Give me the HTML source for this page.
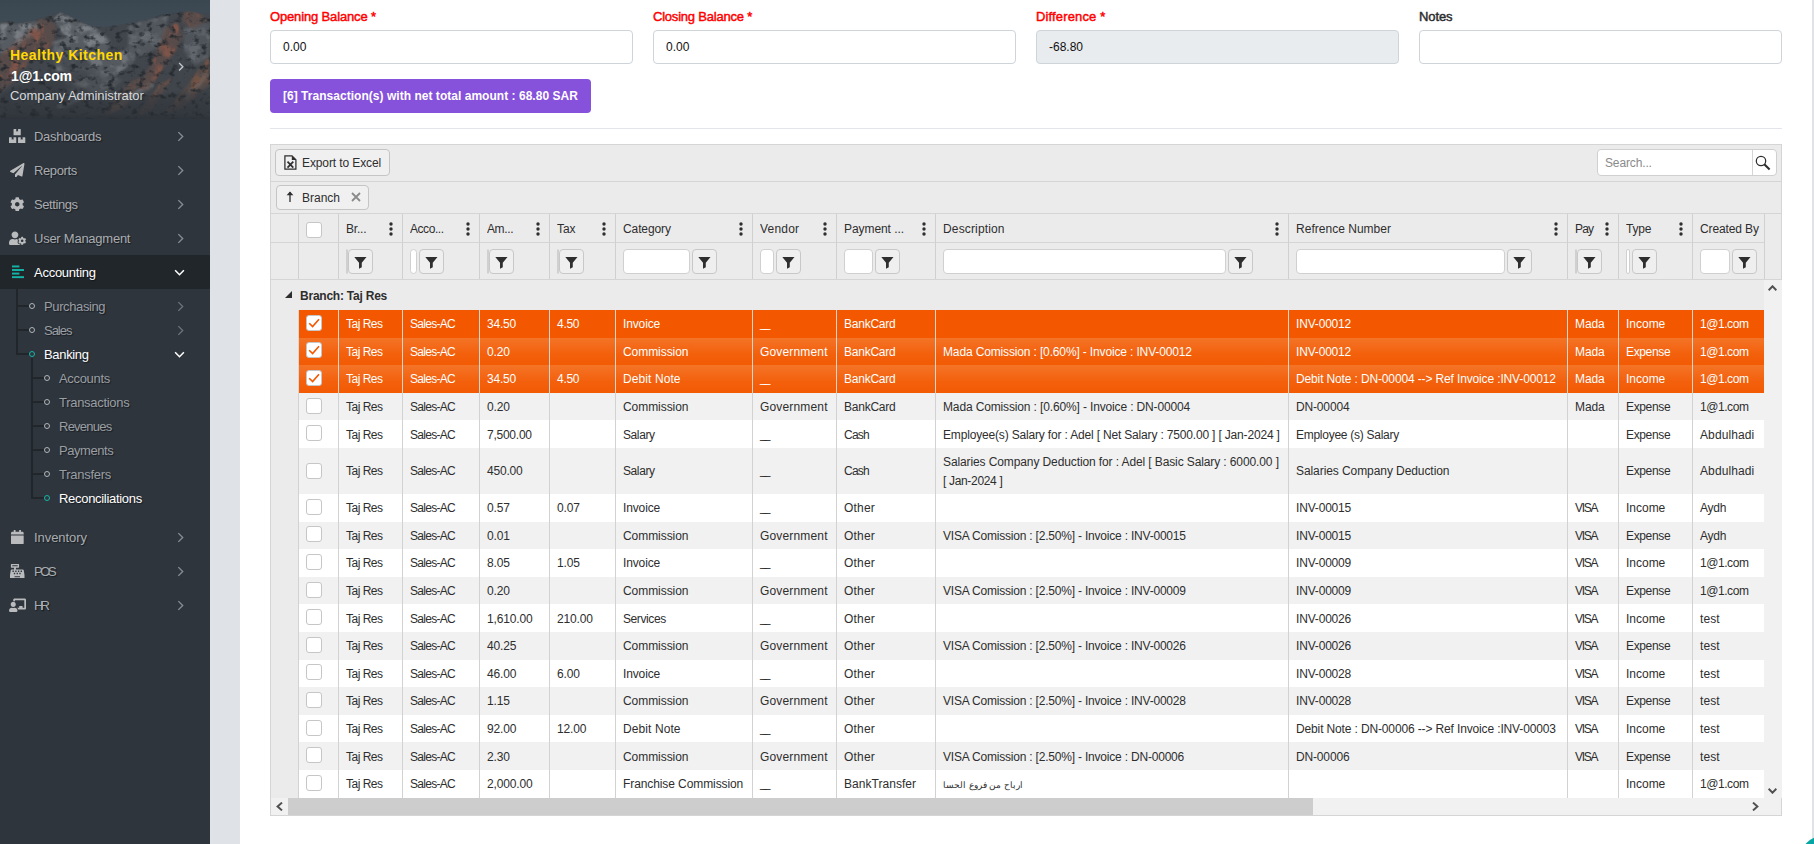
<!DOCTYPE html>
<html><head><meta charset="utf-8"><title>Reconciliations</title>
<style>
*{box-sizing:border-box}
html,body{margin:0;padding:0;overflow:hidden;width:1814px;height:844px}
#root{position:absolute;left:0;top:0;width:1814px;height:844px;overflow:hidden;background:#fff}
body{position:relative;background:#fff;font-family:"Liberation Sans",sans-serif;font-size:12px;color:#2e2e2e}
#sb{position:absolute;left:0;top:0;width:210px;height:844px;background:#2e353d;overflow:hidden}
#strip{position:absolute;left:210px;top:0;width:30px;height:844px;background:#dfe2e6}
#rstrip{position:absolute;left:1812px;top:0;width:2px;height:844px;background:#dfe2e6}
#fab{position:absolute;left:1799.5px;top:836px;width:46px;height:46px;border-radius:50%;background:#06a6a6}
#hdr{position:absolute;left:0;top:0;width:210px;height:119px;overflow:hidden;background:#3b4650}
#hdr svg.bg{position:absolute;left:0;top:0}
#hdr .t1{position:absolute;left:10px;top:46px;font-size:14px;font-weight:700;color:#ffd900;letter-spacing:.46px;white-space:nowrap;line-height:18px}
#hdr .t2{position:absolute;left:11px;top:67px;font-size:14px;font-weight:700;color:#fff;letter-spacing:-.15px;white-space:nowrap;line-height:18px}
#hdr .t3{position:absolute;left:10px;top:87px;font-size:13px;letter-spacing:-.07px;color:#d6d9db;white-space:nowrap;line-height:18px}
.mi{position:absolute;left:0;width:210px;height:34px;color:#a9adb1;font-size:13px;text-shadow:1px 1px 1px rgba(0,0,0,.45)}
.mi.act{background:#21262b;color:#fff}
.mi .ico{position:absolute;left:9px;top:0;width:17px;height:34px;display:flex;align-items:center;justify-content:center}
.mi .lbl{position:absolute;left:34px;top:1px;line-height:34px;white-space:nowrap;letter-spacing:-.26px}
.fa{display:block}
.chev{position:absolute;left:177px;top:50%;margin-top:-5.5px;width:7px;height:11px}
.chevd{position:absolute;left:174px;top:50%;margin-top:-3px;width:11px;height:7px}
.si{position:absolute;left:0;width:210px;height:24px;font-size:13px;text-shadow:1px 1px 1px rgba(0,0,0,.45)}
.si .ring{position:absolute;top:9px;width:6px;height:6px;border:1px solid #b0b4b8;border-radius:50%}
.si .slbl{position:absolute;top:1px;line-height:24px;white-space:nowrap;letter-spacing:-.3px}
.tl{position:absolute;background:#21262b}

#main{position:absolute;left:240px;top:0;width:1572px;height:844px;background:#fff}
.flbl{position:absolute;top:9px;font-size:13px;font-weight:400;color:#ff0000;-webkit-text-stroke:.45px #ff0000;letter-spacing:-.12px;white-space:nowrap;line-height:16px}
.finp{position:absolute;top:30px;width:363px;height:34px;border:1px solid #ced4da;border-radius:4px;background:#fff;font-size:12px;line-height:32px;padding-left:12px;color:#111;font-weight:400}
.pbtn{position:absolute;left:270px;top:79px;width:321px;height:34px;border-radius:4px;background:#8651db;color:#fff;font-weight:700;font-size:12px;line-height:34px;padding-left:13px;white-space:nowrap;letter-spacing:.03px}
.hr{position:absolute;left:270px;top:128px;width:1512px;height:1px;background:#e3e5ea}
#grid{position:absolute;left:270px;top:144px;width:1512px;height:672px;border:1px solid #d5d5d5;background:#ecebec;color:#2e2e2e;font-size:12px;letter-spacing:-.14px}
#grid .abs{position:absolute}
.kbtn{position:absolute;border:1px solid #c5c5c5;border-radius:4px;background:#f0f0f0}
.hline{position:absolute;left:0;width:1510px;height:1px;background:#d5d5d5}
.vline{position:absolute;width:1px;background:#d0d0d0}
.hc{position:absolute;top:70px;height:28px;line-height:30px;white-space:nowrap;overflow:hidden}
.keb{position:absolute;top:78px;width:4px;height:14px}
.fbtn{position:absolute;top:105px;width:25px;height:25px;border:1px solid #c8c8c8;border-radius:4px;background:#efefef}
.fbtn svg{position:absolute;left:4.8px;top:5.8px;width:12.8px;height:13.4px}
.finput{position:absolute;top:105px;height:25px;border:1px solid #d0d0d0;border-radius:4px;background:#fff}
.cb{position:absolute;width:16px;height:16px;border:1px solid #c6c6c6;border-radius:3px;background:#fff}
.row{position:absolute;left:27px;width:1466px}
.row .c{position:absolute;top:0;height:100%;border-left:1px solid #d2d2d2;padding:5.3px 0 0 7px;line-height:18px;white-space:nowrap;overflow:hidden}
.row.sel{color:#fff}
.row.sel .c{border-left-color:#dcd6d0}

.ar{font-size:9.1px;letter-spacing:0}
.grow{position:absolute;left:0;top:135px;width:1493px;height:30px;font-weight:700;line-height:32px;letter-spacing:-.23px}
.vsb{position:absolute;left:1493px;top:135px;width:18px;height:518px;background:#f1f1f1}
.hsb{position:absolute;left:0;top:653px;width:1510px;height:17px;background:#f1f1f1}
.hsb .thumb{position:absolute;left:17px;top:0;width:1025px;height:17px;background:#cdcdcd}
</style></head>
<body><div id="root">
<div id="main"></div>
<div class="flbl" style="left:270px;letter-spacing:-0.151px">Opening Balance *</div>
<div class="flbl" style="left:653px;letter-spacing:-0.214px">Closing Balance *</div>
<div class="flbl" style="left:1036px;letter-spacing:0.138px">Difference *</div>
<div class="flbl" style="left:1419px;color:#2b2b2b;-webkit-text-stroke:.45px #2b2b2b;letter-spacing:-0.117px">Notes</div>
<div class="finp" style="left:270px">0.00</div>
<div class="finp" style="left:653px">0.00</div>
<div class="finp" style="left:1036px;background:#e9ecef">-68.80</div>
<div class="finp" style="left:1419px"></div>
<div class="pbtn">[6] Transaction(s) with net total amount : 68.80 SAR</div>
<div class="hr"></div>
<div id="grid">
<div class="kbtn" style="left:4px;top:4px;width:115px;height:27px"></div>
<svg class="abs" style="left:13px;top:9.5px;width:13px;height:15px" viewBox="0 0 13 15"><path d="M0.9 0.9 H8 L11.9 4.8 V14 H0.9 Z" fill="none" stroke="#2e2e2e" stroke-width="1.25"/><path d="M7.8 0.9 L11.9 5 H7.8 Z" fill="#2e2e2e"/><path d="M3.5 6.6 L9.3 12.6 M9.3 6.6 L3.5 12.6" stroke="#2e2e2e" stroke-width="1.7"/></svg>
<div class="abs" style="left:31px;top:5px;line-height:27px;white-space:nowrap;letter-spacing:-.11px">Export to Excel</div>
<div class="abs" style="left:1326px;top:4px;width:180px;height:27px;border:1px solid #d0d0d0;border-radius:4px;background:#fff"></div>
<div class="abs" style="left:1481px;top:5px;width:1px;height:25px;background:#d5d5d5"></div>
<div class="abs" style="left:1334px;top:5px;line-height:27px;color:#8a8a8a">Search...</div>
<svg class="abs" style="left:1484.4px;top:9.800000000000011px;width:16px;height:16px" viewBox="0 0 16 16"><circle cx="6" cy="6" r="4.7" fill="none" stroke="#2e2e2e" stroke-width="1.25"/><path d="M9.3 9.3 L14.6 14.4" stroke="#2e2e2e" stroke-width="2.1"/></svg>
<div class="hline" style="top:36px"></div>
<div class="kbtn" style="left:5px;top:40px;width:93px;height:25px"></div>
<svg class="abs" style="left:15px;top:46px;width:8px;height:11px" viewBox="0 0 8 11"><path d="M4 1 V11" stroke="#2e2e2e" stroke-width="1.3"/><path d="M0.6 4.2 L4 0.4 L7.4 4.2 Z" fill="#2e2e2e"/></svg>
<div class="abs" style="left:31px;top:41px;line-height:25px;white-space:nowrap;letter-spacing:0">Branch</div>
<svg class="abs" style="left:80px;top:47px;width:10px;height:10px" viewBox="0 0 10 10"><path d="M1 1 L9 9 M9 1 L1 9" stroke="#8a8a8a" stroke-width="1.8"/></svg>
<div class="hline" style="top:68px"></div>
<div class="hline" style="top:97px;width:1494px"></div>
<div class="hline" style="top:134px"></div>
<div class="vline" style="left:27px;top:69px;height:65px"></div>
<div class="vline" style="left:67px;top:69px;height:65px"></div>
<div class="vline" style="left:131px;top:69px;height:65px"></div>
<div class="vline" style="left:208px;top:69px;height:65px"></div>
<div class="vline" style="left:278px;top:69px;height:65px"></div>
<div class="vline" style="left:344px;top:69px;height:65px"></div>
<div class="vline" style="left:481px;top:69px;height:65px"></div>
<div class="vline" style="left:565px;top:69px;height:65px"></div>
<div class="vline" style="left:664px;top:69px;height:65px"></div>
<div class="vline" style="left:1017px;top:69px;height:65px"></div>
<div class="vline" style="left:1296px;top:69px;height:65px"></div>
<div class="vline" style="left:1347px;top:69px;height:65px"></div>
<div class="vline" style="left:1421px;top:69px;height:65px"></div>
<div class="vline" style="left:1493px;top:69px;height:65px"></div>
<div class="cb" style="left:35px;top:77px"></div>
<div class="hc" style="left:75px;top:69px;width:55px"><span style="letter-spacing:-0.186px">Br...</span></div>
<svg class="keb" style="top:77px;left:118px" viewBox="0 0 4 14"><circle cx="2" cy="2" r="1.7" fill="#2e2e2e"/><circle cx="2" cy="7" r="1.7" fill="#2e2e2e"/><circle cx="2" cy="12" r="1.7" fill="#2e2e2e"/></svg>
<div class="hc" style="left:139px;top:69px;width:68px"><span style="letter-spacing:-0.448px">Acco...</span></div>
<svg class="keb" style="top:77px;left:195px" viewBox="0 0 4 14"><circle cx="2" cy="2" r="1.7" fill="#2e2e2e"/><circle cx="2" cy="7" r="1.7" fill="#2e2e2e"/><circle cx="2" cy="12" r="1.7" fill="#2e2e2e"/></svg>
<div class="hc" style="left:216px;top:69px;width:61px"><span style="letter-spacing:-0.379px">Am...</span></div>
<svg class="keb" style="top:77px;left:265px" viewBox="0 0 4 14"><circle cx="2" cy="2" r="1.7" fill="#2e2e2e"/><circle cx="2" cy="7" r="1.7" fill="#2e2e2e"/><circle cx="2" cy="12" r="1.7" fill="#2e2e2e"/></svg>
<div class="hc" style="left:286px;top:69px;width:57px"><span style="letter-spacing:-0.094px">Tax</span></div>
<svg class="keb" style="top:77px;left:331px" viewBox="0 0 4 14"><circle cx="2" cy="2" r="1.7" fill="#2e2e2e"/><circle cx="2" cy="7" r="1.7" fill="#2e2e2e"/><circle cx="2" cy="12" r="1.7" fill="#2e2e2e"/></svg>
<div class="hc" style="left:352px;top:69px;width:128px"><span style="letter-spacing:-0.1px">Category</span></div>
<svg class="keb" style="top:77px;left:468px" viewBox="0 0 4 14"><circle cx="2" cy="2" r="1.7" fill="#2e2e2e"/><circle cx="2" cy="7" r="1.7" fill="#2e2e2e"/><circle cx="2" cy="12" r="1.7" fill="#2e2e2e"/></svg>
<div class="hc" style="left:489px;top:69px;width:75px"><span style="letter-spacing:0.191px">Vendor</span></div>
<svg class="keb" style="top:77px;left:552px" viewBox="0 0 4 14"><circle cx="2" cy="2" r="1.7" fill="#2e2e2e"/><circle cx="2" cy="7" r="1.7" fill="#2e2e2e"/><circle cx="2" cy="12" r="1.7" fill="#2e2e2e"/></svg>
<div class="hc" style="left:573px;top:69px;width:90px"><span style="letter-spacing:-0.07px">Payment ...</span></div>
<svg class="keb" style="top:77px;left:651px" viewBox="0 0 4 14"><circle cx="2" cy="2" r="1.7" fill="#2e2e2e"/><circle cx="2" cy="7" r="1.7" fill="#2e2e2e"/><circle cx="2" cy="12" r="1.7" fill="#2e2e2e"/></svg>
<div class="hc" style="left:672px;top:69px;width:344px"><span style="letter-spacing:0.147px">Description</span></div>
<svg class="keb" style="top:77px;left:1004px" viewBox="0 0 4 14"><circle cx="2" cy="2" r="1.7" fill="#2e2e2e"/><circle cx="2" cy="7" r="1.7" fill="#2e2e2e"/><circle cx="2" cy="12" r="1.7" fill="#2e2e2e"/></svg>
<div class="hc" style="left:1025px;top:69px;width:270px"><span style="letter-spacing:0.02px">Refrence Number</span></div>
<svg class="keb" style="top:77px;left:1283px" viewBox="0 0 4 14"><circle cx="2" cy="2" r="1.7" fill="#2e2e2e"/><circle cx="2" cy="7" r="1.7" fill="#2e2e2e"/><circle cx="2" cy="12" r="1.7" fill="#2e2e2e"/></svg>
<div class="hc" style="left:1304px;top:69px;width:42px"><span style="letter-spacing:-0.844px">Pay</span></div>
<svg class="keb" style="top:77px;left:1334px" viewBox="0 0 4 14"><circle cx="2" cy="2" r="1.7" fill="#2e2e2e"/><circle cx="2" cy="7" r="1.7" fill="#2e2e2e"/><circle cx="2" cy="12" r="1.7" fill="#2e2e2e"/></svg>
<div class="hc" style="left:1355px;top:69px;width:65px"><span style="letter-spacing:-0.172px">Type</span></div>
<svg class="keb" style="top:77px;left:1408px" viewBox="0 0 4 14"><circle cx="2" cy="2" r="1.7" fill="#2e2e2e"/><circle cx="2" cy="7" r="1.7" fill="#2e2e2e"/><circle cx="2" cy="12" r="1.7" fill="#2e2e2e"/></svg>
<div class="hc" style="left:1429px;top:69px;width:63px"><span style="letter-spacing:-0.115px">Created By</span></div>
<div class="finput" style="left:75px;top:104px;width:2px"></div>
<div class="fbtn" style="left:77px;top:104px"><svg viewBox="0 0 13 13"><path d="M0.3 0.8 H12.7 L7.9 6.6 V11 L5.1 12.6 V6.6 Z" fill="#2e2e2e"/></svg></div>
<div class="finput" style="left:139px;top:104px;width:7px"></div>
<div class="fbtn" style="left:148px;top:104px"><svg viewBox="0 0 13 13"><path d="M0.3 0.8 H12.7 L7.9 6.6 V11 L5.1 12.6 V6.6 Z" fill="#2e2e2e"/></svg></div>
<div class="finput" style="left:216px;top:104px;width:2px"></div>
<div class="fbtn" style="left:218px;top:104px"><svg viewBox="0 0 13 13"><path d="M0.3 0.8 H12.7 L7.9 6.6 V11 L5.1 12.6 V6.6 Z" fill="#2e2e2e"/></svg></div>
<div class="finput" style="left:286px;top:104px;width:2px"></div>
<div class="fbtn" style="left:288px;top:104px"><svg viewBox="0 0 13 13"><path d="M0.3 0.8 H12.7 L7.9 6.6 V11 L5.1 12.6 V6.6 Z" fill="#2e2e2e"/></svg></div>
<div class="finput" style="left:352px;top:104px;width:67px"></div>
<div class="fbtn" style="left:421px;top:104px"><svg viewBox="0 0 13 13"><path d="M0.3 0.8 H12.7 L7.9 6.6 V11 L5.1 12.6 V6.6 Z" fill="#2e2e2e"/></svg></div>
<div class="finput" style="left:489px;top:104px;width:14px"></div>
<div class="fbtn" style="left:505px;top:104px"><svg viewBox="0 0 13 13"><path d="M0.3 0.8 H12.7 L7.9 6.6 V11 L5.1 12.6 V6.6 Z" fill="#2e2e2e"/></svg></div>
<div class="finput" style="left:573px;top:104px;width:29px"></div>
<div class="fbtn" style="left:604px;top:104px"><svg viewBox="0 0 13 13"><path d="M0.3 0.8 H12.7 L7.9 6.6 V11 L5.1 12.6 V6.6 Z" fill="#2e2e2e"/></svg></div>
<div class="finput" style="left:672px;top:104px;width:283px"></div>
<div class="fbtn" style="left:957px;top:104px"><svg viewBox="0 0 13 13"><path d="M0.3 0.8 H12.7 L7.9 6.6 V11 L5.1 12.6 V6.6 Z" fill="#2e2e2e"/></svg></div>
<div class="finput" style="left:1025px;top:104px;width:209px"></div>
<div class="fbtn" style="left:1236px;top:104px"><svg viewBox="0 0 13 13"><path d="M0.3 0.8 H12.7 L7.9 6.6 V11 L5.1 12.6 V6.6 Z" fill="#2e2e2e"/></svg></div>
<div class="finput" style="left:1304px;top:104px;width:2px"></div>
<div class="fbtn" style="left:1306px;top:104px"><svg viewBox="0 0 13 13"><path d="M0.3 0.8 H12.7 L7.9 6.6 V11 L5.1 12.6 V6.6 Z" fill="#2e2e2e"/></svg></div>
<div class="finput" style="left:1355px;top:104px;width:4px"></div>
<div class="fbtn" style="left:1361px;top:104px"><svg viewBox="0 0 13 13"><path d="M0.3 0.8 H12.7 L7.9 6.6 V11 L5.1 12.6 V6.6 Z" fill="#2e2e2e"/></svg></div>
<div class="finput" style="left:1429px;top:104px;width:30px"></div>
<div class="fbtn" style="left:1461px;top:104px"><svg viewBox="0 0 13 13"><path d="M0.3 0.8 H12.7 L7.9 6.6 V11 L5.1 12.6 V6.6 Z" fill="#2e2e2e"/></svg></div>

<div class="grow"><svg class="abs" style="left:14px;top:11px;width:7px;height:7px" viewBox="0 0 7 7"><path d="M7 0 V7 H0 Z" fill="#2e2e2e"/></svg><span class="abs" style="left:29px;top:0;white-space:nowrap">Branch: Taj Res</span></div>
<div class="vsb">
<svg class="abs" style="left:4px;top:4.5px;width:9px;height:6px" viewBox="0 0 9 6"><path d="M0.6 5.2 L4.5 1.3 L8.4 5.2" fill="none" stroke="#505050" stroke-width="2"/></svg>
<svg class="abs" style="left:4px;top:507.5px;width:9px;height:6px" viewBox="0 0 9 6"><path d="M0.6 0.8 L4.5 4.7 L8.4 0.8" fill="none" stroke="#505050" stroke-width="2"/></svg>
</div>
<div class="hsb"><div class="thumb"></div>
<svg class="abs" style="left:5px;top:4.3px;width:7px;height:9px" viewBox="0 0 7 9"><path d="M6 0.6 L1.6 4.5 L6 8.4" fill="none" stroke="#505050" stroke-width="2"/></svg>
<svg class="abs" style="left:1481px;top:4.3px;width:7px;height:9px" viewBox="0 0 7 9"><path d="M1 0.6 L5.4 4.5 L1 8.4" fill="none" stroke="#505050" stroke-width="2"/></svg>
</div>

<div class="row sel" style="top:165.0px;height:27.6px;background:#f35800"><div class="c" style="left:0px;width:40px;padding-top:5.3px"><div class="cb" style="left:7px;top:4.8px"><svg style="position:absolute;left:1px;top:1px;width:12px;height:12px" viewBox="0 0 12 12"><path d="M1.2 6.2 L4.6 9.6 L11 2.2" fill="none" stroke="#f35800" stroke-width="1.6"/></svg></div></div><div class="c" style="left:40px;width:64px;padding-top:5.3px"><span style="letter-spacing:-0.503px">Taj Res</span></div><div class="c" style="left:104px;width:77px;padding-top:5.3px"><span style="letter-spacing:-0.705px">Sales-AC</span></div><div class="c" style="left:181px;width:70px;padding-top:5.3px"><span style="letter-spacing:-0.195px">34.50</span></div><div class="c" style="left:251px;width:66px;padding-top:5.3px"><span style="letter-spacing:-0.286px">4.50</span></div><div class="c" style="left:317px;width:137px;padding-top:5.3px"><span style="letter-spacing:-0.13px">Invoice</span></div><div class="c" style="left:454px;width:84px;padding-top:5.3px"><span style="letter-spacing:-2.859px;position:relative;top:-1px">__</span></div><div class="c" style="left:538px;width:99px;padding-top:5.3px"><span style="letter-spacing:-0.232px">BankCard</span></div><div class="c" style="left:637px;width:353px;padding-top:5.3px"></div><div class="c" style="left:990px;width:279px;padding-top:5.3px"><span style="letter-spacing:-0.177px">INV-00012</span></div><div class="c" style="left:1269px;width:51px;padding-top:5.3px"><span style="letter-spacing:-0.077px">Mada</span></div><div class="c" style="left:1320px;width:74px;padding-top:5.3px"><span style="letter-spacing:-0.012px">Income</span></div><div class="c" style="left:1394px;width:72px;padding-top:5.3px"><span style="letter-spacing:-0.441px">1@1.com</span></div></div>
<div class="row sel" style="top:192.6px;height:27.6px;background:linear-gradient(to bottom,#f47427 0%,#f3600c 60%,#f35a04 100%)"><div class="c" style="left:0px;width:40px;padding-top:5.3px"><div class="cb" style="left:7px;top:4.8px"><svg style="position:absolute;left:1px;top:1px;width:12px;height:12px" viewBox="0 0 12 12"><path d="M1.2 6.2 L4.6 9.6 L11 2.2" fill="none" stroke="#f35800" stroke-width="1.6"/></svg></div></div><div class="c" style="left:40px;width:64px;padding-top:5.3px"><span style="letter-spacing:-0.503px">Taj Res</span></div><div class="c" style="left:104px;width:77px;padding-top:5.3px"><span style="letter-spacing:-0.705px">Sales-AC</span></div><div class="c" style="left:181px;width:70px;padding-top:5.3px">0.20</div><div class="c" style="left:251px;width:66px;padding-top:5.3px"></div><div class="c" style="left:317px;width:137px;padding-top:5.3px"><span style="letter-spacing:-0.057px">Commission</span></div><div class="c" style="left:454px;width:84px;padding-top:5.3px"><span style="letter-spacing:0.163px">Government</span></div><div class="c" style="left:538px;width:99px;padding-top:5.3px"><span style="letter-spacing:-0.232px">BankCard</span></div><div class="c" style="left:637px;width:353px;padding-top:5.3px"><span style="letter-spacing:-0.144px">Mada Comission : [0.60%] - Invoice : INV-00012</span></div><div class="c" style="left:990px;width:279px;padding-top:5.3px"><span style="letter-spacing:-0.177px">INV-00012</span></div><div class="c" style="left:1269px;width:51px;padding-top:5.3px"><span style="letter-spacing:-0.077px">Mada</span></div><div class="c" style="left:1320px;width:74px;padding-top:5.3px"><span style="letter-spacing:-0.351px">Expense</span></div><div class="c" style="left:1394px;width:72px;padding-top:5.3px"><span style="letter-spacing:-0.441px">1@1.com</span></div></div>
<div class="row sel" style="top:220.2px;height:27.6px;background:linear-gradient(to bottom,#f47427 0%,#f3600c 60%,#f35a04 100%)"><div class="c" style="left:0px;width:40px;padding-top:5.3px"><div class="cb" style="left:7px;top:4.8px"><svg style="position:absolute;left:1px;top:1px;width:12px;height:12px" viewBox="0 0 12 12"><path d="M1.2 6.2 L4.6 9.6 L11 2.2" fill="none" stroke="#f35800" stroke-width="1.6"/></svg></div></div><div class="c" style="left:40px;width:64px;padding-top:5.3px"><span style="letter-spacing:-0.503px">Taj Res</span></div><div class="c" style="left:104px;width:77px;padding-top:5.3px"><span style="letter-spacing:-0.705px">Sales-AC</span></div><div class="c" style="left:181px;width:70px;padding-top:5.3px"><span style="letter-spacing:-0.195px">34.50</span></div><div class="c" style="left:251px;width:66px;padding-top:5.3px"><span style="letter-spacing:-0.286px">4.50</span></div><div class="c" style="left:317px;width:137px;padding-top:5.3px"><span style="letter-spacing:0.089px">Debit Note</span></div><div class="c" style="left:454px;width:84px;padding-top:5.3px"><span style="letter-spacing:-2.859px;position:relative;top:-1px">__</span></div><div class="c" style="left:538px;width:99px;padding-top:5.3px"><span style="letter-spacing:-0.232px">BankCard</span></div><div class="c" style="left:637px;width:353px;padding-top:5.3px"></div><div class="c" style="left:990px;width:279px;padding-top:5.3px"><span style="letter-spacing:-0.138px">Debit Note : DN-00004 --> Ref Invoice :INV-00012</span></div><div class="c" style="left:1269px;width:51px;padding-top:5.3px"><span style="letter-spacing:-0.077px">Mada</span></div><div class="c" style="left:1320px;width:74px;padding-top:5.3px"><span style="letter-spacing:-0.012px">Income</span></div><div class="c" style="left:1394px;width:72px;padding-top:5.3px"><span style="letter-spacing:-0.441px">1@1.com</span></div></div>
<div class="row" style="top:247.8px;height:27.6px;background:#f1f1f1"><div class="c" style="left:0px;width:40px;padding-top:5.3px"><div class="cb" style="left:7px;top:4.8px"></div></div><div class="c" style="left:40px;width:64px;padding-top:5.3px"><span style="letter-spacing:-0.503px">Taj Res</span></div><div class="c" style="left:104px;width:77px;padding-top:5.3px"><span style="letter-spacing:-0.705px">Sales-AC</span></div><div class="c" style="left:181px;width:70px;padding-top:5.3px">0.20</div><div class="c" style="left:251px;width:66px;padding-top:5.3px"></div><div class="c" style="left:317px;width:137px;padding-top:5.3px"><span style="letter-spacing:-0.057px">Commission</span></div><div class="c" style="left:454px;width:84px;padding-top:5.3px"><span style="letter-spacing:0.163px">Government</span></div><div class="c" style="left:538px;width:99px;padding-top:5.3px"><span style="letter-spacing:-0.232px">BankCard</span></div><div class="c" style="left:637px;width:353px;padding-top:5.3px"><span style="letter-spacing:-0.14px">Mada Comission : [0.60%] - Invoice : DN-00004</span></div><div class="c" style="left:990px;width:279px;padding-top:5.3px"><span style="letter-spacing:-0.158px">DN-00004</span></div><div class="c" style="left:1269px;width:51px;padding-top:5.3px"><span style="letter-spacing:-0.077px">Mada</span></div><div class="c" style="left:1320px;width:74px;padding-top:5.3px"><span style="letter-spacing:-0.351px">Expense</span></div><div class="c" style="left:1394px;width:72px;padding-top:5.3px"><span style="letter-spacing:-0.441px">1@1.com</span></div></div>
<div class="row" style="top:275.4px;height:27.6px;background:#fff"><div class="c" style="left:0px;width:40px;padding-top:5.3px"><div class="cb" style="left:7px;top:4.8px"></div></div><div class="c" style="left:40px;width:64px;padding-top:5.3px"><span style="letter-spacing:-0.503px">Taj Res</span></div><div class="c" style="left:104px;width:77px;padding-top:5.3px"><span style="letter-spacing:-0.705px">Sales-AC</span></div><div class="c" style="left:181px;width:70px;padding-top:5.3px"><span style="letter-spacing:-0.246px">7,500.00</span></div><div class="c" style="left:251px;width:66px;padding-top:5.3px"></div><div class="c" style="left:317px;width:137px;padding-top:5.3px"><span style="letter-spacing:-0.403px">Salary</span></div><div class="c" style="left:454px;width:84px;padding-top:5.3px"><span style="letter-spacing:-2.859px;position:relative;top:-1px">__</span></div><div class="c" style="left:538px;width:99px;padding-top:5.3px"><span style="letter-spacing:-0.755px">Cash</span></div><div class="c" style="left:637px;width:353px;padding-top:5.3px"><span style="letter-spacing:-0.17px">Employee(s) Salary for : Adel [ Net Salary : 7500.00 ] [ Jan-2024 ]</span></div><div class="c" style="left:990px;width:279px;padding-top:5.3px"><span style="letter-spacing:-0.269px">Employee (s) Salary</span></div><div class="c" style="left:1269px;width:51px;padding-top:5.3px"></div><div class="c" style="left:1320px;width:74px;padding-top:5.3px"><span style="letter-spacing:-0.351px">Expense</span></div><div class="c" style="left:1394px;width:72px;padding-top:5.3px"><span style="letter-spacing:0.101px">Abdulhadi</span></div></div>
<div class="row" style="top:303.0px;height:46.0px;background:#f1f1f1"><div class="c" style="left:0px;width:40px;padding-top:13.5px"><div class="cb" style="left:7px;top:14.6px"></div></div><div class="c" style="left:40px;width:64px;padding-top:13.5px"><span style="letter-spacing:-0.503px">Taj Res</span></div><div class="c" style="left:104px;width:77px;padding-top:13.5px"><span style="letter-spacing:-0.705px">Sales-AC</span></div><div class="c" style="left:181px;width:70px;padding-top:13.5px"><span style="letter-spacing:-0.191px">450.00</span></div><div class="c" style="left:251px;width:66px;padding-top:13.5px"></div><div class="c" style="left:317px;width:137px;padding-top:13.5px"><span style="letter-spacing:-0.403px">Salary</span></div><div class="c" style="left:454px;width:84px;padding-top:13.5px"><span style="letter-spacing:-2.859px;position:relative;top:-1px">__</span></div><div class="c" style="left:538px;width:99px;padding-top:13.5px"><span style="letter-spacing:-0.755px">Cash</span></div><div class="c" style="left:637px;width:353px;padding-top:4.7px;line-height:19.2px"><span style="letter-spacing:-0.109px">Salaries Company Deduction for : Adel [ Basic Salary : 6000.00 ]</span><br><span style="letter-spacing:-0.33px">[ Jan-2024 ]</span></div><div class="c" style="left:990px;width:279px;padding-top:13.5px"><span style="letter-spacing:-0.077px">Salaries Company Deduction</span></div><div class="c" style="left:1269px;width:51px;padding-top:13.5px"></div><div class="c" style="left:1320px;width:74px;padding-top:13.5px"><span style="letter-spacing:-0.351px">Expense</span></div><div class="c" style="left:1394px;width:72px;padding-top:13.5px"><span style="letter-spacing:0.101px">Abdulhadi</span></div></div>
<div class="row" style="top:349.0px;height:27.6px;background:#fff"><div class="c" style="left:0px;width:40px;padding-top:5.3px"><div class="cb" style="left:7px;top:4.8px"></div></div><div class="c" style="left:40px;width:64px;padding-top:5.3px"><span style="letter-spacing:-0.503px">Taj Res</span></div><div class="c" style="left:104px;width:77px;padding-top:5.3px"><span style="letter-spacing:-0.705px">Sales-AC</span></div><div class="c" style="left:181px;width:70px;padding-top:5.3px">0.57</div><div class="c" style="left:251px;width:66px;padding-top:5.3px">0.07</div><div class="c" style="left:317px;width:137px;padding-top:5.3px"><span style="letter-spacing:-0.13px">Invoice</span></div><div class="c" style="left:454px;width:84px;padding-top:5.3px"><span style="letter-spacing:-2.859px;position:relative;top:-1px">__</span></div><div class="c" style="left:538px;width:99px;padding-top:5.3px"><span style="letter-spacing:0.184px">Other</span></div><div class="c" style="left:637px;width:353px;padding-top:5.3px"></div><div class="c" style="left:990px;width:279px;padding-top:5.3px"><span style="letter-spacing:-0.177px">INV-00015</span></div><div class="c" style="left:1269px;width:51px;padding-top:5.3px"><span style="letter-spacing:-1.286px">VISA</span></div><div class="c" style="left:1320px;width:74px;padding-top:5.3px"><span style="letter-spacing:-0.012px">Income</span></div><div class="c" style="left:1394px;width:72px;padding-top:5.3px"><span style="letter-spacing:-0.247px">Aydh</span></div></div>
<div class="row" style="top:376.6px;height:27.6px;background:#f1f1f1"><div class="c" style="left:0px;width:40px;padding-top:5.3px"><div class="cb" style="left:7px;top:4.8px"></div></div><div class="c" style="left:40px;width:64px;padding-top:5.3px"><span style="letter-spacing:-0.503px">Taj Res</span></div><div class="c" style="left:104px;width:77px;padding-top:5.3px"><span style="letter-spacing:-0.705px">Sales-AC</span></div><div class="c" style="left:181px;width:70px;padding-top:5.3px">0.01</div><div class="c" style="left:251px;width:66px;padding-top:5.3px"></div><div class="c" style="left:317px;width:137px;padding-top:5.3px"><span style="letter-spacing:-0.057px">Commission</span></div><div class="c" style="left:454px;width:84px;padding-top:5.3px"><span style="letter-spacing:0.163px">Government</span></div><div class="c" style="left:538px;width:99px;padding-top:5.3px"><span style="letter-spacing:0.184px">Other</span></div><div class="c" style="left:637px;width:353px;padding-top:5.3px"><span style="letter-spacing:-0.203px">VISA Comission : [2.50%] - Invoice : INV-00015</span></div><div class="c" style="left:990px;width:279px;padding-top:5.3px"><span style="letter-spacing:-0.177px">INV-00015</span></div><div class="c" style="left:1269px;width:51px;padding-top:5.3px"><span style="letter-spacing:-1.286px">VISA</span></div><div class="c" style="left:1320px;width:74px;padding-top:5.3px"><span style="letter-spacing:-0.351px">Expense</span></div><div class="c" style="left:1394px;width:72px;padding-top:5.3px"><span style="letter-spacing:-0.247px">Aydh</span></div></div>
<div class="row" style="top:404.2px;height:27.6px;background:#fff"><div class="c" style="left:0px;width:40px;padding-top:5.3px"><div class="cb" style="left:7px;top:4.8px"></div></div><div class="c" style="left:40px;width:64px;padding-top:5.3px"><span style="letter-spacing:-0.503px">Taj Res</span></div><div class="c" style="left:104px;width:77px;padding-top:5.3px"><span style="letter-spacing:-0.705px">Sales-AC</span></div><div class="c" style="left:181px;width:70px;padding-top:5.3px">8.05</div><div class="c" style="left:251px;width:66px;padding-top:5.3px">1.05</div><div class="c" style="left:317px;width:137px;padding-top:5.3px"><span style="letter-spacing:-0.13px">Invoice</span></div><div class="c" style="left:454px;width:84px;padding-top:5.3px"><span style="letter-spacing:-2.859px;position:relative;top:-1px">__</span></div><div class="c" style="left:538px;width:99px;padding-top:5.3px"><span style="letter-spacing:0.184px">Other</span></div><div class="c" style="left:637px;width:353px;padding-top:5.3px"></div><div class="c" style="left:990px;width:279px;padding-top:5.3px"><span style="letter-spacing:-0.177px">INV-00009</span></div><div class="c" style="left:1269px;width:51px;padding-top:5.3px"><span style="letter-spacing:-1.286px">VISA</span></div><div class="c" style="left:1320px;width:74px;padding-top:5.3px"><span style="letter-spacing:-0.012px">Income</span></div><div class="c" style="left:1394px;width:72px;padding-top:5.3px"><span style="letter-spacing:-0.441px">1@1.com</span></div></div>
<div class="row" style="top:431.8px;height:27.6px;background:#f1f1f1"><div class="c" style="left:0px;width:40px;padding-top:5.3px"><div class="cb" style="left:7px;top:4.8px"></div></div><div class="c" style="left:40px;width:64px;padding-top:5.3px"><span style="letter-spacing:-0.503px">Taj Res</span></div><div class="c" style="left:104px;width:77px;padding-top:5.3px"><span style="letter-spacing:-0.705px">Sales-AC</span></div><div class="c" style="left:181px;width:70px;padding-top:5.3px">0.20</div><div class="c" style="left:251px;width:66px;padding-top:5.3px"></div><div class="c" style="left:317px;width:137px;padding-top:5.3px"><span style="letter-spacing:-0.057px">Commission</span></div><div class="c" style="left:454px;width:84px;padding-top:5.3px"><span style="letter-spacing:0.163px">Government</span></div><div class="c" style="left:538px;width:99px;padding-top:5.3px"><span style="letter-spacing:0.184px">Other</span></div><div class="c" style="left:637px;width:353px;padding-top:5.3px"><span style="letter-spacing:-0.203px">VISA Comission : [2.50%] - Invoice : INV-00009</span></div><div class="c" style="left:990px;width:279px;padding-top:5.3px"><span style="letter-spacing:-0.177px">INV-00009</span></div><div class="c" style="left:1269px;width:51px;padding-top:5.3px"><span style="letter-spacing:-1.286px">VISA</span></div><div class="c" style="left:1320px;width:74px;padding-top:5.3px"><span style="letter-spacing:-0.351px">Expense</span></div><div class="c" style="left:1394px;width:72px;padding-top:5.3px"><span style="letter-spacing:-0.441px">1@1.com</span></div></div>
<div class="row" style="top:459.4px;height:27.6px;background:#fff"><div class="c" style="left:0px;width:40px;padding-top:5.3px"><div class="cb" style="left:7px;top:4.8px"></div></div><div class="c" style="left:40px;width:64px;padding-top:5.3px"><span style="letter-spacing:-0.503px">Taj Res</span></div><div class="c" style="left:104px;width:77px;padding-top:5.3px"><span style="letter-spacing:-0.705px">Sales-AC</span></div><div class="c" style="left:181px;width:70px;padding-top:5.3px">1,610.00</div><div class="c" style="left:251px;width:66px;padding-top:5.3px">210.00</div><div class="c" style="left:317px;width:137px;padding-top:5.3px"><span style="letter-spacing:-0.402px">Services</span></div><div class="c" style="left:454px;width:84px;padding-top:5.3px"><span style="letter-spacing:-2.859px;position:relative;top:-1px">__</span></div><div class="c" style="left:538px;width:99px;padding-top:5.3px"><span style="letter-spacing:0.184px">Other</span></div><div class="c" style="left:637px;width:353px;padding-top:5.3px"></div><div class="c" style="left:990px;width:279px;padding-top:5.3px"><span style="letter-spacing:-0.177px">INV-00026</span></div><div class="c" style="left:1269px;width:51px;padding-top:5.3px"><span style="letter-spacing:-1.286px">VISA</span></div><div class="c" style="left:1320px;width:74px;padding-top:5.3px"><span style="letter-spacing:-0.012px">Income</span></div><div class="c" style="left:1394px;width:72px;padding-top:5.3px"><span style="letter-spacing:0.085px">test</span></div></div>
<div class="row" style="top:487.0px;height:27.6px;background:#f1f1f1"><div class="c" style="left:0px;width:40px;padding-top:5.3px"><div class="cb" style="left:7px;top:4.8px"></div></div><div class="c" style="left:40px;width:64px;padding-top:5.3px"><span style="letter-spacing:-0.503px">Taj Res</span></div><div class="c" style="left:104px;width:77px;padding-top:5.3px"><span style="letter-spacing:-0.705px">Sales-AC</span></div><div class="c" style="left:181px;width:70px;padding-top:5.3px">40.25</div><div class="c" style="left:251px;width:66px;padding-top:5.3px"></div><div class="c" style="left:317px;width:137px;padding-top:5.3px"><span style="letter-spacing:-0.057px">Commission</span></div><div class="c" style="left:454px;width:84px;padding-top:5.3px"><span style="letter-spacing:0.163px">Government</span></div><div class="c" style="left:538px;width:99px;padding-top:5.3px"><span style="letter-spacing:0.184px">Other</span></div><div class="c" style="left:637px;width:353px;padding-top:5.3px"><span style="letter-spacing:-0.203px">VISA Comission : [2.50%] - Invoice : INV-00026</span></div><div class="c" style="left:990px;width:279px;padding-top:5.3px"><span style="letter-spacing:-0.177px">INV-00026</span></div><div class="c" style="left:1269px;width:51px;padding-top:5.3px"><span style="letter-spacing:-1.286px">VISA</span></div><div class="c" style="left:1320px;width:74px;padding-top:5.3px"><span style="letter-spacing:-0.351px">Expense</span></div><div class="c" style="left:1394px;width:72px;padding-top:5.3px"><span style="letter-spacing:0.085px">test</span></div></div>
<div class="row" style="top:514.6px;height:27.6px;background:#fff"><div class="c" style="left:0px;width:40px;padding-top:5.3px"><div class="cb" style="left:7px;top:4.8px"></div></div><div class="c" style="left:40px;width:64px;padding-top:5.3px"><span style="letter-spacing:-0.503px">Taj Res</span></div><div class="c" style="left:104px;width:77px;padding-top:5.3px"><span style="letter-spacing:-0.705px">Sales-AC</span></div><div class="c" style="left:181px;width:70px;padding-top:5.3px">46.00</div><div class="c" style="left:251px;width:66px;padding-top:5.3px">6.00</div><div class="c" style="left:317px;width:137px;padding-top:5.3px"><span style="letter-spacing:-0.13px">Invoice</span></div><div class="c" style="left:454px;width:84px;padding-top:5.3px"><span style="letter-spacing:-2.859px;position:relative;top:-1px">__</span></div><div class="c" style="left:538px;width:99px;padding-top:5.3px"><span style="letter-spacing:0.184px">Other</span></div><div class="c" style="left:637px;width:353px;padding-top:5.3px"></div><div class="c" style="left:990px;width:279px;padding-top:5.3px"><span style="letter-spacing:-0.177px">INV-00028</span></div><div class="c" style="left:1269px;width:51px;padding-top:5.3px"><span style="letter-spacing:-1.286px">VISA</span></div><div class="c" style="left:1320px;width:74px;padding-top:5.3px"><span style="letter-spacing:-0.012px">Income</span></div><div class="c" style="left:1394px;width:72px;padding-top:5.3px"><span style="letter-spacing:0.085px">test</span></div></div>
<div class="row" style="top:542.2px;height:27.6px;background:#f1f1f1"><div class="c" style="left:0px;width:40px;padding-top:5.3px"><div class="cb" style="left:7px;top:4.8px"></div></div><div class="c" style="left:40px;width:64px;padding-top:5.3px"><span style="letter-spacing:-0.503px">Taj Res</span></div><div class="c" style="left:104px;width:77px;padding-top:5.3px"><span style="letter-spacing:-0.705px">Sales-AC</span></div><div class="c" style="left:181px;width:70px;padding-top:5.3px">1.15</div><div class="c" style="left:251px;width:66px;padding-top:5.3px"></div><div class="c" style="left:317px;width:137px;padding-top:5.3px"><span style="letter-spacing:-0.057px">Commission</span></div><div class="c" style="left:454px;width:84px;padding-top:5.3px"><span style="letter-spacing:0.163px">Government</span></div><div class="c" style="left:538px;width:99px;padding-top:5.3px"><span style="letter-spacing:0.184px">Other</span></div><div class="c" style="left:637px;width:353px;padding-top:5.3px"><span style="letter-spacing:-0.203px">VISA Comission : [2.50%] - Invoice : INV-00028</span></div><div class="c" style="left:990px;width:279px;padding-top:5.3px"><span style="letter-spacing:-0.177px">INV-00028</span></div><div class="c" style="left:1269px;width:51px;padding-top:5.3px"><span style="letter-spacing:-1.286px">VISA</span></div><div class="c" style="left:1320px;width:74px;padding-top:5.3px"><span style="letter-spacing:-0.351px">Expense</span></div><div class="c" style="left:1394px;width:72px;padding-top:5.3px"><span style="letter-spacing:0.085px">test</span></div></div>
<div class="row" style="top:569.8px;height:27.6px;background:#fff"><div class="c" style="left:0px;width:40px;padding-top:5.3px"><div class="cb" style="left:7px;top:4.8px"></div></div><div class="c" style="left:40px;width:64px;padding-top:5.3px"><span style="letter-spacing:-0.503px">Taj Res</span></div><div class="c" style="left:104px;width:77px;padding-top:5.3px"><span style="letter-spacing:-0.705px">Sales-AC</span></div><div class="c" style="left:181px;width:70px;padding-top:5.3px">92.00</div><div class="c" style="left:251px;width:66px;padding-top:5.3px">12.00</div><div class="c" style="left:317px;width:137px;padding-top:5.3px"><span style="letter-spacing:0.089px">Debit Note</span></div><div class="c" style="left:454px;width:84px;padding-top:5.3px"><span style="letter-spacing:-2.859px;position:relative;top:-1px">__</span></div><div class="c" style="left:538px;width:99px;padding-top:5.3px"><span style="letter-spacing:0.184px">Other</span></div><div class="c" style="left:637px;width:353px;padding-top:5.3px"></div><div class="c" style="left:990px;width:279px;padding-top:5.3px"><span style="letter-spacing:-0.138px">Debit Note : DN-00006 --> Ref Invoice :INV-00003</span></div><div class="c" style="left:1269px;width:51px;padding-top:5.3px"><span style="letter-spacing:-1.286px">VISA</span></div><div class="c" style="left:1320px;width:74px;padding-top:5.3px"><span style="letter-spacing:-0.012px">Income</span></div><div class="c" style="left:1394px;width:72px;padding-top:5.3px"><span style="letter-spacing:0.085px">test</span></div></div>
<div class="row" style="top:597.4px;height:27.6px;background:#f1f1f1"><div class="c" style="left:0px;width:40px;padding-top:5.3px"><div class="cb" style="left:7px;top:4.8px"></div></div><div class="c" style="left:40px;width:64px;padding-top:5.3px"><span style="letter-spacing:-0.503px">Taj Res</span></div><div class="c" style="left:104px;width:77px;padding-top:5.3px"><span style="letter-spacing:-0.705px">Sales-AC</span></div><div class="c" style="left:181px;width:70px;padding-top:5.3px">2.30</div><div class="c" style="left:251px;width:66px;padding-top:5.3px"></div><div class="c" style="left:317px;width:137px;padding-top:5.3px"><span style="letter-spacing:-0.057px">Commission</span></div><div class="c" style="left:454px;width:84px;padding-top:5.3px"><span style="letter-spacing:0.163px">Government</span></div><div class="c" style="left:538px;width:99px;padding-top:5.3px"><span style="letter-spacing:0.184px">Other</span></div><div class="c" style="left:637px;width:353px;padding-top:5.3px"><span style="letter-spacing:-0.201px">VISA Comission : [2.50%] - Invoice : DN-00006</span></div><div class="c" style="left:990px;width:279px;padding-top:5.3px"><span style="letter-spacing:-0.158px">DN-00006</span></div><div class="c" style="left:1269px;width:51px;padding-top:5.3px"><span style="letter-spacing:-1.286px">VISA</span></div><div class="c" style="left:1320px;width:74px;padding-top:5.3px"><span style="letter-spacing:-0.351px">Expense</span></div><div class="c" style="left:1394px;width:72px;padding-top:5.3px"><span style="letter-spacing:0.085px">test</span></div></div>
<div class="row" style="top:625.0px;height:27.6px;background:#fff"><div class="c" style="left:0px;width:40px;padding-top:5.3px"><div class="cb" style="left:7px;top:4.8px"></div></div><div class="c" style="left:40px;width:64px;padding-top:5.3px"><span style="letter-spacing:-0.503px">Taj Res</span></div><div class="c" style="left:104px;width:77px;padding-top:5.3px"><span style="letter-spacing:-0.705px">Sales-AC</span></div><div class="c" style="left:181px;width:70px;padding-top:5.3px">2,000.00</div><div class="c" style="left:251px;width:66px;padding-top:5.3px"></div><div class="c" style="left:317px;width:137px;padding-top:5.3px"><span style="letter-spacing:-0.092px">Franchise Commission</span></div><div class="c" style="left:454px;width:84px;padding-top:5.3px"><span style="letter-spacing:-2.859px;position:relative;top:-1px">__</span></div><div class="c" style="left:538px;width:99px;padding-top:5.3px"><span style="letter-spacing:0.037px">BankTransfer</span></div><div class="c" style="left:637px;width:353px;padding-top:5.3px"><span class="ar">ارباح من فروع الحسا</span></div><div class="c" style="left:990px;width:279px;padding-top:5.3px"></div><div class="c" style="left:1269px;width:51px;padding-top:5.3px"></div><div class="c" style="left:1320px;width:74px;padding-top:5.3px"><span style="letter-spacing:-0.012px">Income</span></div><div class="c" style="left:1394px;width:72px;padding-top:5.3px"><span style="letter-spacing:-0.441px">1@1.com</span></div></div>
</div>
<div id="sb"><div id="hdr"><svg class="bg" width="210" height="119" viewBox="0 0 210 119">
<defs>
<filter color-interpolation-filters="sRGB" id="b1" x="-10%" y="-10%" width="120%" height="120%"><feGaussianBlur stdDeviation="1.6"/></filter>
<filter color-interpolation-filters="sRGB" id="b2" x="-10%" y="-10%" width="120%" height="120%"><feGaussianBlur stdDeviation="0.7"/></filter>
<filter color-interpolation-filters="sRGB" id="msnow" x="0" y="0" width="210" height="119" filterUnits="userSpaceOnUse"><feGaussianBlur in="SourceGraphic" stdDeviation="1.2" result="bl"/><feTurbulence type="fractalNoise" baseFrequency="0.07 0.09" numOctaves="3" seed="3"/><feColorMatrix type="matrix" values="0 0 0 0 1  0 0 0 0 1  0 0 0 0 1  4 0 0 0 -1.75" result="m"/><feComposite in="bl" in2="m" operator="in"/></filter>
<filter color-interpolation-filters="sRGB" id="mor" x="0" y="0" width="210" height="119" filterUnits="userSpaceOnUse"><feGaussianBlur in="SourceGraphic" stdDeviation="1.1" result="bl"/><feTurbulence type="fractalNoise" baseFrequency="0.11 0.07" numOctaves="3" seed="11"/><feColorMatrix type="matrix" values="0 0 0 0 1  0 0 0 0 1  0 0 0 0 1  0 4 0 0 -1.95" result="m"/><feComposite in="bl" in2="m" operator="in"/></filter>
<filter color-interpolation-filters="sRGB" id="mdk" x="0" y="0" width="210" height="119" filterUnits="userSpaceOnUse"><feTurbulence type="fractalNoise" baseFrequency="0.13 0.17" numOctaves="3" seed="29"/><feColorMatrix type="matrix" values="0 0 0 0 0.15  0 0 0 0 0.17  0 0 0 0 0.19  0 0 4.2 0 -2.3"/></filter>
<linearGradient id="sky" x1="0" y1="0" x2="0" y2="1"><stop offset="0" stop-color="#3a4650"/><stop offset=".25" stop-color="#414d57"/></linearGradient>
<linearGradient id="dk" x1="0" y1="0" x2="0" y2="1"><stop offset="0" stop-color="#20262c" stop-opacity="0"/><stop offset=".8" stop-color="#20262c" stop-opacity=".05"/><stop offset=".96" stop-color="#252b31" stop-opacity=".35"/><stop offset="1" stop-color="#2a3036" stop-opacity=".8"/></linearGradient>
<clipPath id="mt"><path d="M0 22 L8 21 L20 23 L35 20 L48 16 L61 12 L70 16 L80 21 L92 26 L104 27 L118 25 L130 23 L140 21 L152 18 L160 15 L168 14 L180 12 L190 11 L200 13 L210 14 V119 H0Z"/></clipPath>
</defs>
<rect width="210" height="119" fill="url(#sky)"/>
<g filter="url(#b2)"><path d="M0 22 L8 21 L20 23 L35 20 L48 16 L61 12 L70 16 L80 21 L92 26 L104 27 L118 25 L130 23 L140 21 L152 18 L160 15 L168 14 L180 12 L190 11 L200 13 L210 14 V119 H0Z" fill="#42474d"/></g>
<g clip-path="url(#mt)">
<g filter="url(#b1)" fill="#7a7f85" opacity=".4"><path d="M0 23 L20 24 L35 21 L42 24 L32 36 L16 46 L0 56Z"/>
<path d="M61 12 L72 18 L84 24 L98 30 L110 40 L108 56 L92 54 L78 46 L68 38 L60 30 L53 20Z"/>
<path d="M52 42 L70 38 L92 52 L110 58 L127 48 L136 44 L134 62 L114 76 L82 78 L56 70Z" fill="#757a80"/>
<path d="M128 26 L150 19 L168 15 L166 32 L158 48 L142 56 L128 46Z" fill="#6c7177"/>
<path d="M183 28 L210 22 V58 L196 66 L184 52Z" fill="#686d73"/>
<path d="M56 106 L100 84 L104 88 L60 110Z M108 110 L150 82 L154 86 L112 113Z M184 98 L204 72 L208 75 L188 101Z" fill="#74787d"/>
<path d="M60 74 L100 72 L122 80 L100 100 L70 96Z" fill="#5e6368"/></g>
<g filter="url(#msnow)" fill="#80858b" opacity=".85"><path d="M0 23 L20 24 L35 21 L42 24 L32 36 L16 46 L0 56Z"/>
<path d="M61 12 L72 18 L84 24 L98 30 L110 40 L108 56 L92 54 L78 46 L68 38 L60 30 L53 20Z"/>
<path d="M52 42 L70 38 L92 52 L110 58 L127 48 L136 44 L134 62 L114 76 L82 78 L56 70Z" fill="#757a80"/>
<path d="M128 26 L150 19 L168 15 L166 32 L158 48 L142 56 L128 46Z" fill="#6c7177"/>
<path d="M183 28 L210 22 V58 L196 66 L184 52Z" fill="#686d73"/>
<path d="M56 106 L100 84 L104 88 L60 110Z M108 110 L150 82 L154 86 L112 113Z M184 98 L204 72 L208 75 L188 101Z" fill="#74787d"/>
<path d="M60 74 L100 72 L122 80 L100 100 L70 96Z" fill="#5e6368"/></g>
<g filter="url(#b1)" fill="#7d5649" opacity=".4"><path d="M40 20 L51 19 L57 30 L53 44 L43 54 L30 62 L18 74 L8 86 L0 92 V56 L12 46 L24 36 L34 26Z"/>
<path d="M165 28 L177 23 L183 36 L175 52 L166 64 L156 78 L148 90 L137 88 L148 70 L156 54 L161 40Z"/>
<path d="M181 13 L197 11 L207 20 L194 29 L183 23Z"/>
<path d="M210 56 V84 L182 108 L162 116 L184 90 L200 68Z" fill="#765546"/>
<path d="M128 84 L144 76 L124 108 L104 116Z M160 84 L172 78 L152 110 L136 116Z" fill="#785547"/></g>
<g filter="url(#mor)" fill="#87574a" opacity=".9"><path d="M40 20 L51 19 L57 30 L53 44 L43 54 L30 62 L18 74 L8 86 L0 92 V56 L12 46 L24 36 L34 26Z"/>
<path d="M165 28 L177 23 L183 36 L175 52 L166 64 L156 78 L148 90 L137 88 L148 70 L156 54 L161 40Z"/>
<path d="M181 13 L197 11 L207 20 L194 29 L183 23Z"/>
<path d="M210 56 V84 L182 108 L162 116 L184 90 L200 68Z" fill="#765546"/>
<path d="M128 84 L144 76 L124 108 L104 116Z M160 84 L172 78 L152 110 L136 116Z" fill="#785547"/></g>
<g filter="url(#b1)" opacity=".6"><path d="M0 94 L30 80 L60 78 L84 88 L104 100 L150 96 L210 90 V119 H0Z" fill="#363b41"/><path d="M60 60 L84 56 L96 70 L80 82 L62 76Z" fill="#3f444a"/></g>
<rect width="210" height="119" filter="url(#mdk)" opacity=".95"/>
</g>
<rect width="210" height="119" fill="url(#dk)"/>
</svg>
<div class="t1">Healthy Kitchen</div><div class="t2">1@1.com</div><div class="t3">Company Administrator</div>
<svg class="chev" style="left:178px;top:61.5px;margin:0;width:6px;height:9.5px" viewBox="0 0 8 12"><path d="M1.5 1 L6.5 6 L1.5 11" fill="none" stroke="#c3c9cf" stroke-width="1.7"/></svg>
</div>
<div class="tl" style="left:16px;top:289px;width:2px;height:66px"></div>
<div class="tl" style="left:18px;top:305px;width:11px;height:2px"></div>
<div class="tl" style="left:18px;top:329px;width:11px;height:2px"></div>
<div class="tl" style="left:18px;top:353px;width:11px;height:2px"></div>
<div class="tl" style="left:31px;top:358px;width:2px;height:141px"></div>
<div class="tl" style="left:33px;top:377px;width:11px;height:2px"></div>
<div class="tl" style="left:33px;top:401px;width:11px;height:2px"></div>
<div class="tl" style="left:33px;top:425px;width:11px;height:2px"></div>
<div class="tl" style="left:33px;top:449px;width:11px;height:2px"></div>
<div class="tl" style="left:33px;top:473px;width:11px;height:2px"></div>
<div class="tl" style="left:33px;top:497px;width:11px;height:2px"></div>
<div class="mi" style="top:119px"><span class="ico"><svg class="fa" style="width:16.31px;height:14.5px;" viewBox="0 0 576 512"><path fill="#b9bbbd" d="M560 288h-80v96l-32-21.300-32 21.300v-96h-80c-8.800 0-16 7.200-16 16v192c0 8.800 7.200 16 16 16h224c8.800 0 16-7.200 16-16V304c0-8.800-7.200-16-16-16zm-384-64h224c8.800 0 16-7.200 16-16V16c0-8.800-7.200-16-16-16h-80v96l-32-21.300L256 96V0h-80c-8.800 0-16 7.200-16 16v192c0 8.800 7.200 16 16 16zm64 64h-80v96l-32-21.300L96 384v-96H16c-8.800 0-16 7.200-16 16v192c0 8.800 7.200 16 16 16h224c8.800 0 16-7.200 16-16V304c0-8.800-7.200-16-16-16z"/></svg></span><span class="lbl"><span style="letter-spacing:-0.29px">Dashboards</span></span><svg class="chev" viewBox="0 0 8 12"><path d="M1.5 1 L6.5 6 L1.5 11" fill="none" stroke="#868c92" stroke-width="1.6"/></svg></div>
<div class="mi" style="top:153px"><span class="ico"><svg class="fa" style="width:14.5px;height:14.5px;" viewBox="0 0 512 512"><path fill="#b9bbbd" d="M476 3.200L12.500 270.600c-18.100 10.400-15.800 35.600 2.200 43.200L121 358.400l287.300-253.200c5.500-4.900 13.300 2.600 8.600 8.300L176 407v80.500c0 23.600 28.500 32.900 42.500 15.800L282 426l124.600 52.200c14.200 6 30.400-2.900 33-18.200l72-432C515 7.800 493.300-6.800 476 3.200z"/></svg></span><span class="lbl"><span style="letter-spacing:-0.38px">Reports</span></span><svg class="chev" viewBox="0 0 8 12"><path d="M1.5 1 L6.5 6 L1.5 11" fill="none" stroke="#868c92" stroke-width="1.6"/></svg></div>
<div class="mi" style="top:187px"><span class="ico"><svg class="fa" style="width:14.5px;height:14.5px;" viewBox="0 0 512 512"><path fill="#b9bbbd" d="M487.400 315.700l-42.600-24.600c4.300-23.200 4.300-47 0-70.200l42.600-24.600c4.900-2.800 7.100-8.600 5.500-14-11.100-35.600-30-67.800-54.700-94.600-3.800-4.100-10-5.100-14.800-2.300L380.800 110c-17.900-15.400-38.500-27.300-60.800-35.100V25.800c0-5.600-3.900-10.500-9.400-11.700-36.700-8.200-74.300-7.800-109.200 0-5.500 1.200-9.400 6.100-9.400 11.700V75c-22.200 7.900-42.800 19.800-60.800 35.100L88.700 85.500c-4.900-2.800-11-1.900-14.800 2.300-24.700 26.700-43.600 58.900-54.700 94.600-1.700 5.400.6 11.200 5.500 14L67.300 221c-4.300 23.200-4.300 47 0 70.200l-42.600 24.600c-4.900 2.800-7.100 8.600-5.500 14 11.100 35.600 30 67.800 54.700 94.600 3.800 4.100 10 5.100 14.800 2.300l42.600-24.600c17.900 15.400 38.500 27.300 60.800 35.100v49.200c0 5.600 3.900 10.500 9.400 11.700 36.700 8.200 74.300 7.800 109.200 0 5.500-1.200 9.400-6.100 9.400-11.700v-49.200c22.200-7.900 42.800-19.800 60.800-35.100l42.600 24.600c4.900 2.800 11 1.900 14.800-2.300 24.700-26.700 43.600-58.900 54.700-94.600 1.500-5.500-.7-11.300-5.600-14.100zM256 336c-44.100 0-80-35.900-80-80s35.900-80 80-80 80 35.900 80 80-35.900 80-80 80z"/></svg></span><span class="lbl"><span style="letter-spacing:-0.426px">Settings</span></span><svg class="chev" viewBox="0 0 8 12"><path d="M1.5 1 L6.5 6 L1.5 11" fill="none" stroke="#868c92" stroke-width="1.6"/></svg></div>
<div class="mi" style="top:221px"><span class="ico"><svg class="fa" style="width:18.12px;height:14.5px;" viewBox="0 0 640 512"><path fill="#b9bbbd" d="M610.500 373.300c2.600-14.100 2.600-28.500 0-42.600l25.800-14.900c3-1.700 4.300-5.200 3.300-8.500-6.700-21.600-18.200-41.200-33.200-57.400-2.300-2.500-6-3.100-9-1.400l-25.800 14.900c-10.900-9.300-23.400-16.500-36.900-21.300v-29.800c0-3.400-2.400-6.400-5.700-7.100-22.300-5-45-4.800-66.200 0-3.300.7-5.700 3.700-5.700 7.100v29.800c-13.500 4.800-26 12-36.900 21.300l-25.800-14.900c-2.900-1.700-6.700-1.100-9 1.400-15 16.200-26.500 35.800-33.200 57.400-1 3.300.4 6.800 3.300 8.500l25.800 14.900c-2.600 14.100-2.600 28.500 0 42.600l-25.800 14.900c-3 1.700-4.300 5.200-3.300 8.500 6.700 21.600 18.200 41.100 33.200 57.400 2.300 2.500 6 3.100 9 1.400l25.800-14.900c10.900 9.300 23.400 16.500 36.900 21.300v29.800c0 3.400 2.400 6.400 5.700 7.100 22.300 5 45 4.800 66.200 0 3.300-.7 5.700-3.700 5.700-7.100v-29.800c13.500-4.800 26-12 36.900-21.300l25.800 14.900c2.900 1.700 6.700 1.100 9-1.400 15-16.200 26.500-35.800 33.200-57.400 1-3.300-.4-6.800-3.300-8.500l-25.800-14.900zM496 400.500c-26.800 0-48.500-21.800-48.500-48.500s21.800-48.500 48.500-48.500 48.500 21.800 48.500 48.500-21.700 48.500-48.500 48.500zM224 256c70.700 0 128-57.300 128-128S294.700 0 224 0 96 57.300 96 128s57.300 128 128 128zm201.200 226.500c-2.300-1.200-4.600-2.600-6.800-3.900l-7.900 4.600c-6 3.400-12.800 5.300-19.600 5.300-10.900 0-21.400-4.600-28.900-12.600-18.300-19.800-32.300-43.900-40.200-69.600-5.500-17.700 1.900-36.400 17.900-45.700l7.900-4.600c-.1-2.600-.1-5.200 0-7.800l-7.900-4.600c-16-9.200-23.400-28-17.900-45.700.9-2.900 2.200-5.800 3.200-8.700-3.800-.3-7.500-1.200-11.400-1.200h-16.700c-22.200 10.200-46.900 16-72.900 16s-50.600-5.800-72.900-16h-16.700C60.200 288 0 348.200 0 422.400V464c0 26.500 21.500 48 48 48h352c10.100 0 19.500-3.200 27.200-8.500-1.200-3.800-2-7.700-2-11.800v-9.200z"/></svg></span><span class="lbl"><span style="letter-spacing:-0.248px">User Managment</span></span><svg class="chev" viewBox="0 0 8 12"><path d="M1.5 1 L6.5 6 L1.5 11" fill="none" stroke="#868c92" stroke-width="1.6"/></svg></div>
<div class="mi act" style="top:255px"><span class="ico"><svg class="fa" style="width:12px;height:13.5px" viewBox="0 0 13 14" preserveAspectRatio="none"><g fill="#14b5a6"><rect x="0" y="0.5" width="8" height="2"/><rect x="0" y="4.2" width="13" height="2"/><rect x="0" y="7.9" width="8" height="2"/><rect x="0" y="11.6" width="13" height="2"/></g></svg></span><span class="lbl"><span style="letter-spacing:-0.259px">Accounting</span></span><svg class="chevd" viewBox="0 0 12 8"><path d="M1 1.5 L6 6.5 L11 1.5" fill="none" stroke="#fff" stroke-width="1.8"/></svg></div>
<div class="mi" style="top:520px"><span class="ico"><svg class="fa" style="width:12.69px;height:14.5px;" viewBox="0 0 448 512"><path fill="#b9bbbd" d="M12 192h424c6.600 0 12 5.400 12 12v260c0 26.500-21.500 48-48 48H48c-26.500 0-48-21.500-48-48V204c0-6.600 5.400-12 12-12zm436-44v-36c0-26.500-21.500-48-48-48h-48V12c0-6.600-5.400-12-12-12h-40c-6.600 0-12 5.400-12 12v52H160V12c0-6.600-5.400-12-12-12h-40c-6.600 0-12 5.400-12 12v52H48C21.500 64 0 85.500 0 112v36c0 6.600 5.400 12 12 12h424c6.600 0 12-5.400 12-12z"/></svg></span><span class="lbl"><span style="letter-spacing:-0.061px">Inventory</span></span><svg class="chev" viewBox="0 0 8 12"><path d="M1.5 1 L6.5 6 L1.5 11" fill="none" stroke="#868c92" stroke-width="1.6"/></svg></div>
<div class="mi" style="top:554px"><span class="ico"><svg class="fa" style="width:14.5px;height:14.5px" viewBox="0 0 512 512"><path fill="#b9bbbd" fill-rule="evenodd" d="M48 0h256a16 16 0 0 1 16 16v96a16 16 0 0 1-16 16h-96v64h244.800a32 32 0 0 1 31.600 26.700l26.700 160c.6 3.500.9 7 .9 10.500V480a32 32 0 0 1-32 32H32a32 32 0 0 1-32-32v-90.800c0-3.500.3-7 .9-10.500l26.700-160A32 32 0 0 1 59.100 192H144v-64H48a16 16 0 0 1-16-16V16A16 16 0 0 1 48 0zm32 48v32h192V48zM88 232h48v48H88zm96 0h48v48h-48zm96 0h48v48h-48zm96 0h48v48h-48zM136 312h48v48h-48zm96 0h48v48h-48zm96 0h48v48h-48zM160 432h192v32H160z"/></svg></span><span class="lbl"><span style="letter-spacing:-2.334px">POS</span></span><svg class="chev" viewBox="0 0 8 12"><path d="M1.5 1 L6.5 6 L1.5 11" fill="none" stroke="#868c92" stroke-width="1.6"/></svg></div>
<div class="mi" style="top:588px"><span class="ico"><svg class="fa" style="width:18.12px;height:14.5px;" viewBox="0 0 640 512"><path fill="#b9bbbd" d="M208 352c-2.390 0-4.780.35-7.060 1.090C187.980 357.300 174.350 360 160 360c-14.350 0-27.980-2.700-40.950-6.910-2.280-.74-4.660-1.090-7.050-1.090C49.940 352-.33 402.480 0 464.620.14 490.880 21.730 512 48 512h224c26.270 0 47.860-21.120 48-47.380.33-62.140-49.940-112.620-112-112.620zm-48-32c53.020 0 96-42.980 96-96s-42.980-96-96-96-96 42.980-96 96 42.980 96 96 96zM592 0H208c-26.470 0-48 22.250-48 49.590V96c23.420 0 45.100 6.780 64 17.800V64h352v288h-64v-64H384v64h-76.240c19.100 16.690 33.120 38.730 39.690 64H592c26.470 0 48-22.250 48-49.590V49.590C640 22.250 618.470 0 592 0z"/></svg></span><span class="lbl"><span style="letter-spacing:-2.881px">HR</span></span><svg class="chev" viewBox="0 0 8 12"><path d="M1.5 1 L6.5 6 L1.5 11" fill="none" stroke="#868c92" stroke-width="1.6"/></svg></div>
<div class="si" style="top:294px;color:#9a9fa4"><span class="ring" style="left:29px;border-color:#b0b4b8"></span><span class="slbl" style="left:44px"><span style="letter-spacing:-0.383px">Purchasing</span></span><svg class="chev" viewBox="0 0 8 12"><path d="M1.5 1 L6.5 6 L1.5 11" fill="none" stroke="#6b7278" stroke-width="1.6"/></svg></div>
<div class="si" style="top:318px;color:#9a9fa4"><span class="ring" style="left:29px;border-color:#b0b4b8"></span><span class="slbl" style="left:44px"><span style="letter-spacing:-1.033px">Sales</span></span><svg class="chev" viewBox="0 0 8 12"><path d="M1.5 1 L6.5 6 L1.5 11" fill="none" stroke="#6b7278" stroke-width="1.6"/></svg></div>
<div class="si" style="top:342px;color:#fff"><span class="ring" style="left:29px;border-color:#14b5a6"></span><span class="slbl" style="left:44px"><span style="letter-spacing:-0.331px">Banking</span></span><svg class="chevd" viewBox="0 0 12 8"><path d="M1 1.5 L6 6.5 L11 1.5" fill="none" stroke="#fff" stroke-width="1.8"/></svg></div>
<div class="si" style="top:366px;color:#9a9fa4"><span class="ring" style="left:44px;border-color:#b0b4b8"></span><span class="slbl" style="left:59px"><span style="letter-spacing:-0.326px">Accounts</span></span></div>
<div class="si" style="top:390px;color:#9a9fa4"><span class="ring" style="left:44px;border-color:#b0b4b8"></span><span class="slbl" style="left:59px"><span style="letter-spacing:-0.294px">Transactions</span></span></div>
<div class="si" style="top:414px;color:#9a9fa4"><span class="ring" style="left:44px;border-color:#b0b4b8"></span><span class="slbl" style="left:59px"><span style="letter-spacing:-0.75px">Revenues</span></span></div>
<div class="si" style="top:438px;color:#9a9fa4"><span class="ring" style="left:44px;border-color:#b0b4b8"></span><span class="slbl" style="left:59px"><span style="letter-spacing:-0.445px">Payments</span></span></div>
<div class="si" style="top:462px;color:#9a9fa4"><span class="ring" style="left:44px;border-color:#b0b4b8"></span><span class="slbl" style="left:59px"><span style="letter-spacing:-0.265px">Transfers</span></span></div>
<div class="si" style="top:486px;color:#fff"><span class="ring" style="left:44px;border-color:#14b5a6"></span><span class="slbl" style="left:59px"><span style="letter-spacing:-0.303px">Reconciliations</span></span></div></div>
<div id="strip"></div><div id="rstrip"></div><div id="fab"></div>
</div></body></html>
